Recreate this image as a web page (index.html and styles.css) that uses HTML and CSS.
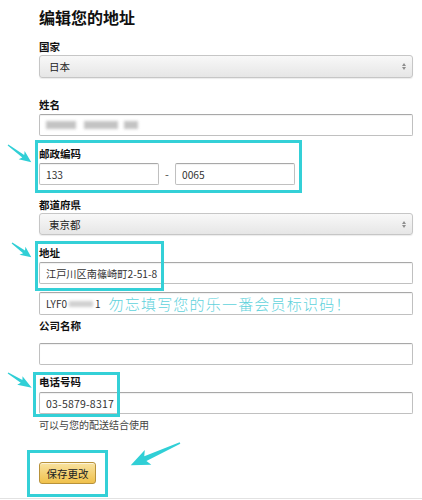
FILE: index.html
```html
<!DOCTYPE html>
<html lang="zh-CN">
<head>
<meta charset="utf-8">
<title>编辑您的地址</title>
<link rel="stylesheet" href="styles.css">
</head>
<body>
<div class="page">
  <h1 class="title">编辑您的地址</h1>

  <label class="label l-country">国家</label>
  <div class="select s-country"><span>日本</span><svg class="caret" width="4" height="7" viewBox="0 0 4 7"><path d="M0 3 L2 0 L4 3 Z M0 4 L2 7 L4 4 Z" fill="#777"/></svg></div>

  <label class="label l-name">姓名</label>
  <div class="input i-name"><span class="blur b1"></span><span class="blur b2"></span><span class="blur b3"></span></div>

  <label class="label l-postal">邮政编码</label>
  <div class="postal">
    <div class="input i-postal">133</div>
    <span class="dash">-</span>
    <div class="input i-postal">0065</div>
  </div>

  <label class="label l-pref">都道府県</label>
  <div class="select s-pref"><span>東京都</span><svg class="caret" width="4" height="7" viewBox="0 0 4 7"><path d="M0 3 L2 0 L4 3 Z M0 4 L2 7 L4 4 Z" fill="#777"/></svg></div>

  <label class="label l-addr">地址</label>
  <div class="input i-addr1">江戸川区南篠崎町2-51-8</div>
  <div class="input i-addr2"><span>LYF0</span><span class="blur b4"></span><span>1</span><span class="note">勿忘填写您的乐一番会员标识码！</span></div>

  <label class="label l-company">公司名称</label>
  <div class="input i-company"></div>

  <label class="label l-phone">电话号码</label>
  <div class="input i-phone">03-5879-8317</div>
  <p class="hint">可以与您的配送结合使用</p>

  <button class="save">保存更改</button>
  <div class="rule"></div>

  <div class="mark m-postal"></div>
  <div class="mark m-addr"></div>
  <div class="mark m-phone"></div>
  <div class="mark m-save"></div>

  <svg class="arrows" width="422" height="500" viewBox="0 0 422 500">
    <g fill="#30cfd6">
      <g transform="translate(8 145) rotate(36.5)">
        <polygon points="0,-0.6 19,-1.6 17,-5 29,0 17,5 19,1.6 0,0.6"/>
      </g>
      <g transform="translate(12 243) rotate(36.4)">
        <polygon points="0,-0.6 15,-1.6 13,-5 24,0 13,5 15,1.6 0,0.6"/>
      </g>
      <g transform="translate(8 373) rotate(32)">
        <polygon points="0,-0.6 16,-1.6 14,-5 28,0 14,5 16,1.6 0,0.6"/>
      </g>
      <g transform="translate(180 443) rotate(155.8)">
        <polygon points="0,-0.8 38,-2.6 35,-8 54,0 35,8 38,2.6 0,0.8"/>
      </g>
    </g>
  </svg>
</div>
</body>
</html>
```
FILE: styles.css
```css
* { box-sizing: border-box; }
html, body { margin: 0; padding: 0; background: #fff; }
body {
  font-family: "Noto Sans CJK SC", "Liberation Sans", Arial, sans-serif;
  color: #111;
  width: 422px;
  height: 500px;
  overflow: hidden;
}
.page {
  position: relative;
  padding: 4px 9px 0 39px;
  width: 422px;
  height: 500px;
}
.title {
  margin: 0;
  font-size: 16px;
  line-height: 26px;
  font-weight: 700;
  color: #111;
}
.label {
  display: block;
  font-size: 10.5px;
  line-height: 14px;
  height: 14px;
  font-weight: 700;
  color: #111;
}
.l-country { margin-top: 10px; }
.l-name { margin-top: 20px; }
.l-postal { margin-top: 11px; }
.l-pref { margin-top: 13px; }
.l-addr { margin-top: 11px; }
.l-company { margin-top: 4px; }
.l-phone { margin-top: 10px; }

.select {
  display: flex;
  align-items: center;
  justify-content: space-between;
  width: 374px;
  height: 23px;
  margin-top: 1px;
  padding: 0 6px 0 9px;
  border: 1px solid #c6c6c6;
  border-radius: 3px;
  background: linear-gradient(#f8f8f8, #e6e6e6);
  box-shadow: 0 1px 1px rgba(0,0,0,0.08);
  font-size: 10.5px;
  color: #222;
}
.s-pref { height: 22px; }
.caret { display: block; opacity: 0.8; }

.input {
  display: flex;
  align-items: center;
  width: 374px;
  height: 22px;
  margin-top: 2px;
  padding: 0 6px;
  border: 1px solid #c0c0c0;
  border-top-color: #a8a8a8;
  border-radius: 2px;
  background: #fff;
  box-shadow: inset 0 1px 1px rgba(0,0,0,0.06);
  font-size: 10.2px;
  color: #333;
  white-space: nowrap;
}
.i-addr1 { margin-top: 2px; }
.i-addr2 { margin-top: 8px; height: 23px; position: relative; font-size: 10px; }
.i-company { margin-top: 10px; }
.i-phone { margin-top: 3px; font-size: 10.5px; letter-spacing: 0.2px; }

.postal {
  display: flex;
  align-items: center;
  margin-top: 2px;
}
.postal .input { margin-top: 0; }
.i-postal { width: 120px; }
.dash {
  width: 16px;
  text-align: center;
  font-size: 11px;
  color: #444;
}

.blur {
  display: inline-block;
  height: 8px;
  background: #b9b9b9;
  filter: blur(1.4px);
  opacity: 0.85;
}
.b1 { width: 30px; }
.b2 { width: 34px; margin-left: 8px; }
.b3 { width: 14px; margin-left: 6px; }
.b4 { width: 24px; height: 6px; margin: 0 2px 0 2px; background: #c8c8c8; }

.note {
  margin-left: 8px;
  font-size: 15px;
  font-weight: 300;
  letter-spacing: 1.2px;
  color: #5fd2dc;
}

.hint {
  margin: 4px 0 0;
  font-size: 10px;
  line-height: 14px;
  color: #444;
}

.save {
  display: block;
  margin-top: 30px;
  width: 57px;
  height: 22px;
  padding: 0;
  border: 1px solid #b8923a;
  border-radius: 3px;
  background: linear-gradient(#f8e2a0, #f0c14b);
  box-shadow: inset 0 1px 0 rgba(255,255,255,0.6);
  font-family: "Noto Sans CJK SC", sans-serif;
  font-size: 10.5px;
  color: #222;
}

.rule {
  margin: 14px 0 0 -39px;
  width: 422px;
  border-top: 1px solid #e2e2e2;
}

.mark {
  position: absolute;
  border: 3px solid #34d0d7;
}
.m-postal { left: 35px; top: 140px; width: 267px; height: 53px; }
.m-addr { left: 35px; top: 241px; width: 129px; height: 50px; }
.m-phone { left: 33px; top: 372px; width: 87px; height: 45px; }
.m-save { left: 27px; top: 450px; width: 81px; height: 47px; }

.arrows {
  position: absolute;
  left: 0;
  top: 0;
  pointer-events: none;
}
```
